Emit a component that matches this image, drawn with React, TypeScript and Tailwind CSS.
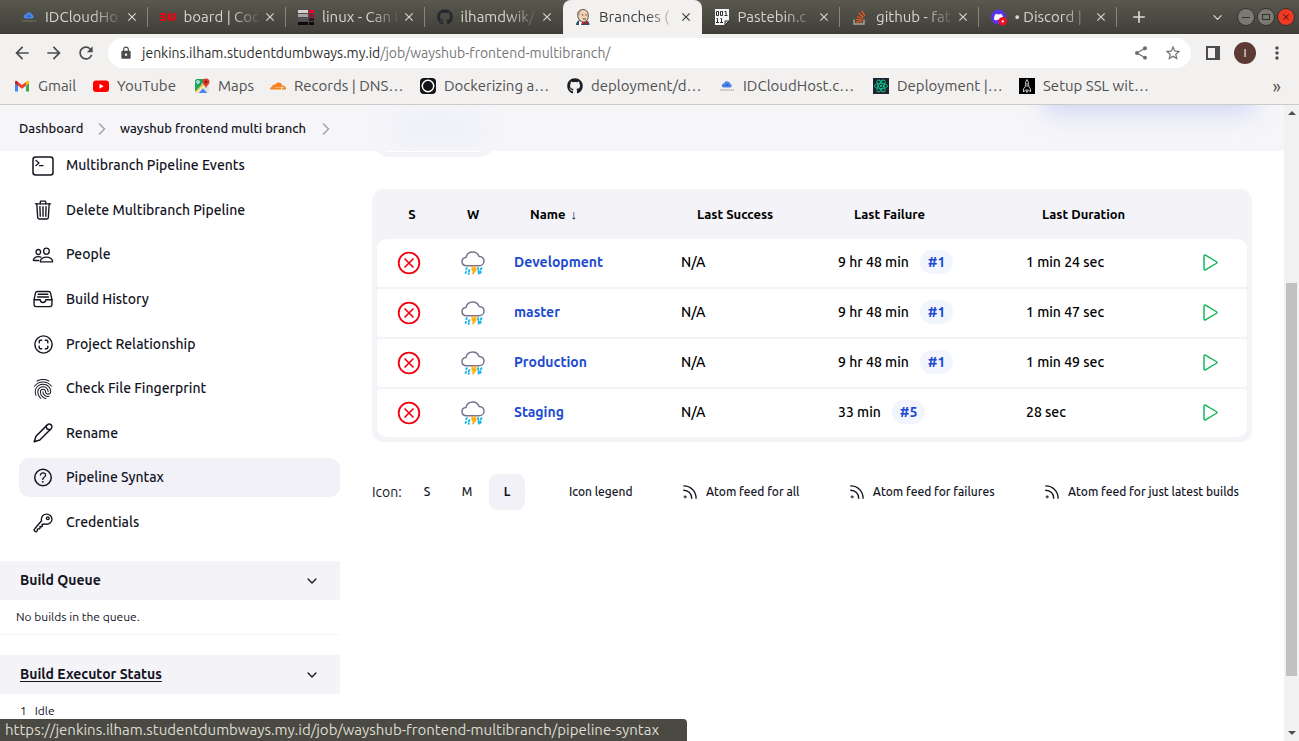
import React from "react";
import {
  IoTrashOutline, IoPeopleOutline, IoFileTrayFullOutline, IoScanCircleOutline,
  IoHelpCircleOutline, IoKeyOutline, IoChevronDown, IoPlayOutline,
} from "react-icons/io5";
import { MdArrowBack, MdArrowForward, MdRefresh, MdLock, MdShare, MdStarBorder, MdMoreVert, MdAdd, MdClose, MdFingerprint } from "react-icons/md";
import { FaGithub } from "react-icons/fa";
import { SiCloudflare } from "react-icons/si";

const CloudFavicon = () => (
  <svg width="16" height="16" viewBox="0 0 16 16">
    <path d="M4.6 9.6a2 2 0 0 1 .2-4 3.4 3.4 0 0 1 6.5.2 2 2 0 0 1 .1 3.8z" fill="#4a86e8" />
    <path d="M8 5.6 5.8 8h4.400z" fill="#2a63c8" />
    <path d="M1 12h14" stroke="#8a8a8a" strokeWidth="1.4" strokeDasharray="1.500 .6" opacity=".6" />
  </svg>
);
const DumbwaysFavicon = () => (
  <svg width="16" height="16" viewBox="0 0 16 16" fill="none" stroke="#e50914" strokeWidth="1.900">
    <path d="M0 5h3.500q2.300 0 2.300 3t-2.300 3H0M.5 8h3" />
    <path d="M8.800 4v4.500a1.600 2.500 0 0 0 3 1.200 1.600 2.500 0 0 0 3-1.200V4M11.800 4v5" />
  </svg>
);
const StripesFavicon = () => (
  <svg width="16" height="16" viewBox="0 0 16 16">
    <path fill="#d5d2d6" d="M0 1h10v3H0z" /><path fill="#f00028" d="M11 1h5v3h-5z" />
    <path fill="#a5a2a8" d="M0 5h10v3H0z" /><path fill="#9c0f2b" d="M11 5h5v3h-5z" />
    <path fill="#55525a" d="M0 9h10v3H0z" /><path fill="#3a141c" d="M11 9h5v3h-5z" />
    <path fill="#0c0a0c" d="M0 13h10v3H0zM11 13h5v3h-5z" />
  </svg>
);
const JenkinsFavicon = () => (
  <svg width="16" height="16" viewBox="0 0 16 16">
    <path d="M1 16c0-3 2-4.500 4-5h6c2 .5 3.500 2.500 3.500 5z" fill="#2f4a63" />
    <path d="M2.500 6C2.500 2 5 .5 8 .5S13.500 2.500 13.300 7 11 13 8.500 13 3 10.500 2.500 6z" fill="#efd0b4" stroke="#3c3430" strokeWidth=".8" />
    <path d="M2.300 7C2 2 4.500.4 8 .4c-2 1-3.500 2-3.500 5.600z" fill="#a58f7c" />
    <path d="M6.800 6h1.500M10.300 6h1.500M8 9.800q1.500.8 3 0" stroke="#3c3430" strokeWidth=".9" fill="none" />
    <path d="m7 12.500 2.500 1.200L12.500 12v3.500L9.500 14 7 15.800z" fill="#d8242c" />
    <path d="m4 12 3 1-1 3H4z" fill="#fff" />
  </svg>
);
const PastebinFavicon = () => (
  <svg width="16" height="16" viewBox="0 0 16 16">
    <path d="M1 0h14v12l-4 4H1z" fill="#f5f5f5" />
    <g fill="none" stroke="#2c2c2c">
      <path d="M2.500 2.500h2v4h-2zM6.500 2.500h2v4h-2zM10.500 2.500h1.500v4M10.500 6.500h3M2.500 9.500h1v4M2 13.500h3M6.500 9.500h1v4M6 13.500h3" />
      <path d="M15 12h-4v4z" fill="#cfd8e8" />
    </g>
  </svg>
);
const StackFavicon = () => (
  <svg width="16" height="16" viewBox="0 0 16 16" fill="none">
    <path d="M2 10.500V15h10v-4.500" stroke="#a8a8a0" strokeWidth="1.400" />
    <path d="M4 12.800h6.200M4.200 10.300l6.100.8M5 7.500l5.700 2M6.800 4.300l4.600 4M9.800 1.500l3 5.500" stroke="#f0571b" strokeWidth="1.300" />
  </svg>
);
const DiscordFavicon = () => (
  <svg width="17" height="17" viewBox="0 0 17 17">
    <circle cx="8" cy="8" r="8" fill="#5b35e8" />
    <path d="M3.300 10.800C3.300 7.500 4 5.500 5 5l1.800-.5.500.8h1.600l.5-.8 1.800.5c1.200 1 1.800 3 1.800 5.800l-2.200 1-.8-1H6.200l-.8 1z" fill="#fff" />
    <circle cx="12.500" cy="12.500" r="4.500" fill="#f01020" />
    <circle cx="12.500" cy="12.500" r="1.200" fill="#fff" />
  </svg>
);
const GmailIcon = () => (
  <svg width="16" height="16" viewBox="0 0 16 16">
    <path d="M1 4v9.500h3V7.500z" fill="#4285f4" /><path d="M15 4v9.500h-3V7.500z" fill="#34a853" />
    <path d="M12 7.700V4l.8-.8C14 2.400 15 3 15 4.300v1.200z" fill="#fbbc04" />
    <path d="M4 7.700V4L8 7l4-3v3.700l-4 3z" fill="#ea4335" />
    <path d="M1 5.500V4.300C1 3 2 2.400 3.200 3.200L4 4v3.700z" fill="#c5221f" />
  </svg>
);
const YoutubeIcon = () => (
  <svg width="16" height="16" viewBox="0 0 16 16">
    <rect y="2.500" width="16" height="11.500" rx="3" fill="#f00" />
    <path d="M6.500 5.800v4.900l4.200-2.450z" fill="#fff" />
  </svg>
);
const MapsIcon = () => (
  <svg width="16" height="16" viewBox="0 0 16 16">
    <path d="M1 2.500 2.500 1H11l-8 13.500H2.500L1 13z" fill="#1fa463" />
    <path d="M13.500 15h-11L8 9.200z" fill="#4f86ec" />
    <path d="M13.500 15 15 13.500V8L9 9z" fill="#dfe3e0" />
    <path d="m1 13.500 8-8 2 2-8.500 7.500z" fill="#f7cf3c" /><path d="m2 15 7-7 1 1-5.500 6z" fill="#f1f1f1" />
    <path d="M12 .5a3.500 3.500 0 0 1 3.500 3.500c0 2.500-2.500 3-3.500 6.500-1-3.500-3.500-4-3.500-6.500A3.500 3.500 0 0 1 12 .5z" fill="#dc3b2f" />
    <circle cx="12" cy="4" r="1.200" fill="#7c150e" /><circle cx="4" cy="4" r="1.300" fill="none" stroke="#fff" />
  </svg>
);
const RingIcon = () => (
  <svg width="16" height="16" viewBox="0 0 16 16">
    <rect width="16" height="16" rx="4" fill="#111318" />
    <circle cx="8" cy="8" r="5.700" fill="none" stroke="#fff" strokeWidth="1.500" />
  </svg>
);
const AtomIcon = () => (
  <svg width="16" height="16" viewBox="0 0 16 16">
    <rect width="16" height="16" fill="#20232f" />
    <g fill="none" stroke="#12b886" strokeWidth="1">
      <ellipse cx="8" cy="8" rx="6.500" ry="2.600" /><ellipse cx="8" cy="8" rx="6.500" ry="2.600" transform="rotate(60 8 8)" />
      <ellipse cx="8" cy="8" rx="6.500" ry="2.600" transform="rotate(120 8 8)" />
    </g>
    <circle cx="8" cy="8" r="1.300" fill="#12b886" />
  </svg>
);
const RocketIcon = () => (
  <svg width="16" height="16" viewBox="0 0 16 16">
    <rect width="16" height="16" fill="#000" />
    <path d="M8 1.500C6.500 3.500 6.300 6 6.300 8.500L4.500 11v3l2-2h3l2 2v-3L9.700 8.500C9.700 6 9.500 3.500 8 1.500zM8 5v4M7.500 12.500v2M8.700 12.500v2" fill="none" stroke="#ddd" strokeWidth=".9" />
  </svg>
);
const TerminalIcon = () => (
  <svg width="22" height="20" viewBox="0 0 22 20" fill="none" stroke="currentColor" strokeWidth="1.500" strokeLinejoin="round" strokeLinecap="round">
    <rect x="1" y="1" width="20" height="18" rx="2.500" />
    <path d="m4 4.500 3 2.500-3 2.500M7.500 9.700h3.500" strokeWidth="1.300" />
  </svg>
);
const PencilIcon = () => (
  <svg width="20" height="20" viewBox="0 0 20 20" fill="none" stroke="currentColor" strokeWidth="1.500" strokeLinejoin="round" strokeLinecap="round">
    <path d="M1.200 18.800 3 13.200 14.300 1.900a2.400 2.400 0 0 1 3.800 3.800L6.800 17z" />
    <path d="m13 3.300 1 2.700 3 .8" />
  </svg>
);
const FeedIcon = () => (
  <svg width="14" height="14" viewBox="0 0 15 15" fill="none" stroke="currentColor" strokeWidth="1.400" strokeLinecap="round">
    <path d="M.8 1A13 13 0 0 1 14 14.200M.8 5.600A8.600 8.600 0 0 1 9.400 14.200" />
    <circle cx="2.300" cy="12.700" r="1.300" fill="currentColor" stroke="#777" strokeWidth=".8" />
  </svg>
);
const FailedIcon = () => (
  <svg width="24" height="24" viewBox="0 0 24 24" fill="none" stroke="#f4000f" strokeLinecap="round" role="img" aria-label="Failed">
    <circle cx="12" cy="12" r="10.300" strokeWidth="1.800" />
    <path d="m8 8 8 8M16 8l-8 8" strokeWidth="1.700" />
  </svg>
);
const StormIcon = () => (
  <svg width="24" height="24" viewBox="0 0 24 24" fill="none" strokeLinecap="round" strokeLinejoin="round" role="img" aria-label="Stormy">
    <path d="M5.800 14.800C2.900 14.800 1 13 1 10.600 1 8.300 2.600 6.800 4.900 6.500 5.700 3.300 8.200 1 11.700 1c3 0 5.300 1.600 6.400 4.600 2.900.2 4.900 1.900 4.900 4.600 0 2.800-2.200 4.600-5 4.600z" stroke="#77738f" strokeWidth="1.500" />
    <path d="m5.800 17.200-.5 1M4.900 21l-.3.900M8.300 19.200l-.5 1.200M7.700 22.800l.1-.2M16.900 17.200l.4 1M20.400 17.200l-.5 1M19.500 20.500l.1 1.200M17.500 20l.3 2.600" stroke="#12b4ea" strokeWidth="1.900" />
    <path d="M11.400 16v3.300h1.800L12 22.600l3-4.200h-2l1.400-2.900" stroke="#ffae13" strokeWidth="1.800" />
  </svg>
);
const Chevron = () => (
  <svg width="8" height="12" viewBox="0 0 8 12" fill="none" stroke="#a3a0b4" strokeWidth="1.500" strokeLinecap="round" strokeLinejoin="round" aria-hidden="true">
    <path d="m1.500 1 5 5-5 5" />
  </svg>
);

const tabs = [
  { title: "IDCloudHo", icon: <CloudFavicon /> },
  { title: "board | Coc", icon: <DumbwaysFavicon /> },
  { title: "linux - Can I", icon: <StripesFavicon /> },
  { title: "ilhamdwik/", icon: <FaGithub size={16} color="#25292e" /> },
  { title: "Branches (", icon: <JenkinsFavicon />, active: true },
  { title: "Pastebin.c", icon: <PastebinFavicon /> },
  { title: "github - fat", icon: <StackFavicon /> },
  { title: "• Discord |", icon: <DiscordFavicon /> },
];

const bookmarks = [
  { label: "Gmail", icon: <GmailIcon />, width: "w-[79px]" },
  { label: "YouTube", icon: <YoutubeIcon />, width: "w-[101px]" },
  { label: "Maps", icon: <MapsIcon />, width: "w-[76px]" },
  { label: "Records | DNS…", icon: <SiCloudflare size={16} color="#f6821f" />, width: "w-[150px]" },
  { label: "Dockerizing a…", icon: <RingIcon />, width: "w-[147px]" },
  { label: "deployment/d…", icon: <FaGithub size={16} color="#1b1f23" />, width: "w-[152px]" },
  { label: "IDCloudHost.c…", icon: <CloudFavicon />, width: "w-[154px]" },
  { label: "Deployment |…", icon: <AtomIcon />, width: "w-[146px]" },
  { label: "Setup SSL wit…", icon: <RocketIcon />, width: "w-[146px]" },
];

const tasks = [
  { label: "Multibranch Pipeline Events", icon: <TerminalIcon /> },
  { label: "Delete Multibranch Pipeline", icon: <IoTrashOutline size={22} /> },
  { label: "People", icon: <IoPeopleOutline size={22} /> },
  { label: "Build History", icon: <IoFileTrayFullOutline size={22} /> },
  { label: "Project Relationship", icon: <IoScanCircleOutline size={23} /> },
  { label: "Check File Fingerprint", icon: <MdFingerprint size={24} /> },
  { label: "Rename", icon: <PencilIcon /> },
  { label: "Pipeline Syntax", icon: <IoHelpCircleOutline size={25} />, active: true },
  { label: "Credentials", icon: <IoKeyOutline size={22} /> },
];

const branches = [
  { name: "Development", failure: "9 hr 48 min", build: "#1", duration: "1 min 24 sec" },
  { name: "master", failure: "9 hr 48 min", build: "#1", duration: "1 min 47 sec" },
  { name: "Production", failure: "9 hr 48 min", build: "#1", duration: "1 min 49 sec" },
  { name: "Staging", failure: "33 min", build: "#5", duration: "28 sec" },
];

function TabStrip() {
  return (
    <div className="flex h-[34px] shrink-0 bg-linear-to-b from-[#5a594e] to-[#3f3e39] pl-[9px]">
      <div className="flex min-w-0 flex-1" role="tablist">
        {tabs.map((tab, i) => (
          <div
            key={tab.title}
            role="tab"
            aria-selected={!!tab.active}
            className={`flex min-w-0 flex-1 items-center pr-2 pl-3 ${tab.active ? "rounded-t-lg bg-[#f2f1f0] text-[#3c3c3c]" : "text-[#d8d6cd]"}`}
          >
            <span className="flex w-4 shrink-0 justify-center">{tab.icon}</span>
            <span className="ml-2 min-w-0 flex-1 mask-r-from-60% mask-r-to-100% text-[15px] whitespace-nowrap">{tab.title}</span>
            <button aria-label={`Close ${tab.title}`} className="flex w-[16px] shrink-0 justify-center"><MdClose size={14} /></button>
            <span className={`-mr-2 ml-[7px] h-5 w-px shrink-0 ${tab.active || i === 3 ? "bg-transparent" : "bg-[#87867c]"}`} />
          </div>
        ))}
      </div>
      <div className="flex w-[182px] shrink-0 items-center text-[#dfdbd2]">
        <button aria-label="New tab" className="ml-3"><MdAdd size={20} /></button>
        <button aria-label="Search tabs" className="ml-auto mr-[14px]"><IoChevronDown size={13} /></button>
        <div className="mr-[5px] flex gap-1">
          <button aria-label="Minimize" className="flex size-4 items-center justify-center rounded-full bg-[#7b7a72] ring-1 ring-[#33322e]"><span className="h-px w-2 bg-[#33322e]" /></button>
          <button aria-label="Maximize" className="flex size-4 items-center justify-center rounded-full bg-[#7b7a72] ring-1 ring-[#33322e]"><span className="h-[6px] w-2 border border-[#33322e]" /></button>
          <button aria-label="Close window" className="flex size-4 items-center justify-center rounded-full bg-[#ee3a24] text-[#5a140a] ring-1 ring-[#33322e]"><MdClose size={10} /></button>
        </div>
      </div>
    </div>
  );
}

function Toolbar() {
  return (
    <div className="flex h-[38px] shrink-0 items-center bg-[#f2f1f0] pl-[12px] pr-3 text-[#4c4c4c]">
      <div className="flex w-24 shrink-0 gap-3">
        <button aria-label="Back"><MdArrowBack size={20} /></button>
        <button aria-label="Forward"><MdArrowForward size={20} /></button>
        <button aria-label="Reload"><MdRefresh size={20} /></button>
      </div>
      <div className="flex h-[30px] min-w-0 flex-1 items-center rounded-full bg-white pr-[9px] pl-[11px]">
        <MdLock size={14} className="shrink-0" />
        <a href="#url" className="ml-[9px] min-w-0 flex-1 text-[14px] whitespace-nowrap text-[#777]">
          <span className="text-[#2e2e2e]">jenkins.ilham.studentdumbways.my.id</span>/job/wayshub-frontend-multibranch/
        </a>
        <button aria-label="Share" className="mr-[15px] text-[#6e6e6e]"><MdShare size={16} /></button>
        <button aria-label="Bookmark this page" className="text-[#6e6e6e]"><MdStarBorder size={18} /></button>
      </div>
      <button aria-label="Side panel" className="ml-[15px] h-[14px] w-[14px] border-2 border-r-5 border-[#4c4c4c]" />
      <button aria-label="Profile" className="ml-[14px] flex size-[22px] items-center justify-center rounded-full bg-[#5d3a34] text-[12px] text-white">I</button>
      <button aria-label="Menu" className="ml-[11px]"><MdMoreVert size={20} /></button>
    </div>
  );
}

function BookmarksBar() {
  return (
    <nav className="flex h-[33px] shrink-0 items-center border-b border-[#cdcbc8] bg-[#f2f1f0] pr-[18px] pb-1 pl-[14px] text-[15px] text-[#4f4f4f]">
      {bookmarks.map((b) => (
        <a key={b.label} href="#bookmark" className={`flex shrink-0 items-center gap-2 whitespace-nowrap ${b.width}`}>
          <span className="shrink-0">{b.icon}</span>
          {b.label}
        </a>
      ))}
      <button aria-label="More bookmarks" className="ml-auto text-[18px] leading-5">»</button>
    </nav>
  );
}

function Breadcrumbs() {
  return (
    <nav aria-label="Breadcrumb" className="relative z-10 flex h-[46px] shrink-0 items-center overflow-hidden bg-[#f6f6f9] pt-px pl-[19px] text-[13px] font-medium text-[#14141f]">
      <span className="absolute top-1 left-[390px] h-9 w-[95px] rounded-full bg-[#eff1f9] blur-md" />
      <span className="absolute -top-7 right-[30px] h-9 w-[210px] bg-[#cfd6f4] blur-md" />
      <a href="#dashboard" className="w-[79px]">Dashboard</a>
      <Chevron />
      <a href="#project" className="mr-4 ml-[14px]">wayshub frontend multi branch</a>
      <Chevron />
    </nav>
  );
}

function PaneHeader({ title, linked }: { title: string; linked?: boolean }) {
  return (
    <div className="flex h-[39px] items-center justify-between bg-[#f3f3f8] pr-[21px] pl-5 text-[14px] font-bold">
      {linked ? <a href="#executors" className="underline underline-offset-2">{title}</a> : <h2>{title}</h2>}
      <button aria-label={`Toggle ${title}`}><IoChevronDown size={14} /></button>
    </div>
  );
}

function SidePanel() {
  return (
    <aside className="w-[340px] shrink-0 text-[#14141f]">
      <ul className="-mt-[5px] flex h-[396px] flex-col justify-between pl-[19px]">
        {tasks.map((t) => (
          <li key={t.label}>
            <a href="#task" className={`flex h-[39px] items-center rounded-[10px] pl-3 text-[14px] font-medium ${t.active ? "bg-[#f2f1f8]" : ""}`}>
              <span className="mr-[11px] flex w-6 justify-center">{t.icon}</span>
              {t.label}
            </a>
          </li>
        ))}
      </ul>
      <section className="mt-[19px]">
        <PaneHeader title="Build Queue" />
        <p className="border-b border-[#f3f3f8] py-2 pl-4 text-[12px] leading-[18px]">No builds in the queue.</p>
      </section>
      <section className="mt-5">
        <PaneHeader title="Build Executor Status" linked />
        <p className="flex gap-2 pt-2 pl-5 text-[12px] leading-[18px]"><span>1</span><span>Idle</span></p>
      </section>
    </aside>
  );
}

function BranchTable() {
  const head = "pt-0.5 pl-[25px] text-left font-bold";
  const cell = "bg-white pb-0.5 pl-[9px]";
  return (
    <div className="rounded-xl bg-[#f3f3f8] px-[5px] pb-[3px]">
      <table className="w-full table-fixed border-separate border-spacing-x-0 border-spacing-y-[2px] text-black">
        <colgroup>
          <col className="w-16" /><col className="w-16" /><col className="w-[167px]" /><col className="w-[157px]" />
          <col className="w-[188px]" /><col /><col className="w-[73px]" />
        </colgroup>
        <thead className="text-[13px]">
          <tr className="h-[46px]">
            <th className="pt-0.5 pl-1.5">S</th><th className="pt-0.5">W</th>
            <th className={head}>Name <span className="ml-0.5 font-normal">↓</span></th>
            <th className={head}>Last Success</th><th className={head}>Last Failure</th><th className={head}>Last Duration</th><th />
          </tr>
        </thead>
        <tbody className="text-[14px] font-medium">
          {branches.map((b, i) => {
            const first = i === 0;
            const last = i === branches.length - 1;
            return (
              <tr key={b.name} className="h-12">
                <td className={`bg-white ${first ? "rounded-tl-[9px]" : "rounded-tl-[3px]"} ${last ? "rounded-bl-[9px]" : "rounded-bl-[3px]"}`}><span className="flex justify-center"><FailedIcon /></span></td>
                <td className="bg-white"><span className="flex justify-center"><StormIcon /></span></td>
                <td className={cell}><a href="#branch" className="font-bold text-[#1d4bd0]">{b.name}</a></td>
                <td className={cell}>N/A</td>
                <td className={cell}>
                  <span className="flex items-center gap-[11px]">
                    {b.failure}
                    <a href="#build" className="rounded-full bg-[#f2f5fe] px-2 leading-6 font-bold text-[#1d4bd0]">{b.build}</a>
                  </span>
                </td>
                <td className={cell}>{b.duration}</td>
                <td className={`bg-white pb-0.5 ${first ? "rounded-tr-[9px]" : "rounded-tr-[3px]"} ${last ? "rounded-br-[9px]" : "rounded-br-[3px]"}`}>
                  <button aria-label={`Build ${b.name}`} className="flex w-full justify-center text-[#0fb554]"><IoPlayOutline size={23} /></button>
                </td>
              </tr>
            );
          })}
        </tbody>
      </table>
    </div>
  );
}

function TableFooter() {
  return (
    <div className="mt-8 flex items-center pr-[13px] text-[12px] font-medium text-[#14141f]">
      <span className="w-[37px] text-[14px] font-normal">Icon:</span>
      <div className="flex gap-1">
        {["S", "M", "L"].map((s) => (
          <button key={s} className={`size-9 rounded-lg ${s === "L" ? "bg-[#f2f1f8] font-bold" : ""}`}>{s}</button>
        ))}
      </div>
      <div className="ml-11 flex flex-1 items-center justify-between">
        <a href="#legend">Icon legend</a>
        {["Atom feed for all", "Atom feed for failures", "Atom feed for just latest builds"].map((f) => (
          <a key={f} href="#feed" className="flex items-center gap-[9px]"><FeedIcon />{f}</a>
        ))}
      </div>
    </div>
  );
}

function Scrollbar() {
  return (
    <div className="flex w-[15px] shrink-0 flex-col items-center bg-[#f1f1f1] py-[6px]" aria-hidden="true">
      <span className="size-0 border-x-4 border-b-4 border-x-transparent border-b-[#505050]" />
      <span className="mt-[168px] h-[393px] w-[11px] bg-[#c1c1c1]" />
      <span className="mt-auto size-0 border-x-4 border-t-4 border-x-transparent border-t-[#505050]" />
    </div>
  );
}

export default function App() {
  return (
    <div className="relative flex h-screen flex-col overflow-hidden bg-white font-['Ubuntu','Noto_Sans',sans-serif]">
      <TabStrip />
      <Toolbar />
      <BookmarksBar />
      <div className="flex min-h-0 flex-1">
        <div className="flex min-w-0 flex-1 flex-col">
          <Breadcrumbs />
          <div className="flex min-h-0 flex-1">
            <SidePanel />
            <main className="min-w-0 flex-1 px-8">
              <div className="-mt-[30px] mb-8 h-9 w-[124px] rounded-[20px] border-5 border-[#f3f3f8]" />
              <BranchTable />
              <TableFooter />
            </main>
          </div>
        </div>
        <Scrollbar />
      </div>
      <div className="absolute bottom-0 left-0 z-20 h-[22px] min-w-[687px] rounded-tr bg-[#4a4a43] pr-1.5 pl-[5px] text-[15px] leading-[22px] text-[#dfdbd2]">
        https://jenkins.ilham.studentdumbways.my.id/job/wayshub-frontend-multibranch/pipeline-syntax
      </div>
    </div>
  );
}
